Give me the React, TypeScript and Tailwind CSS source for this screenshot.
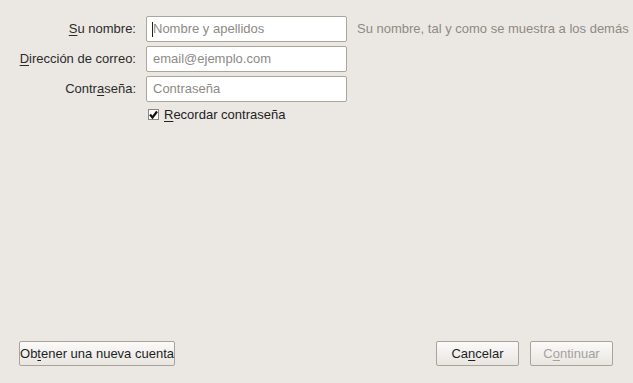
const FONT = "font-['Liberation_Sans',Arial,sans-serif]";

const FIELDS = [
  { pre: "", key: "S", post: "u nombre:", placeholder: "Nombre y apellidos", focused: true, hint: "Su nombre, tal y como se muestra a los demás" },
  { pre: "", key: "D", post: "irección de correo:", placeholder: "email@ejemplo.com", focused: false, hint: "" },
  { pre: "Contr", key: "a", post: "seña:", placeholder: "Contraseña", focused: false, hint: "" },
];

function Mnemonic({ pre, k, post }: { pre: string; k: string; post: string }) {
  return (
    <>
      {pre}
      <span className="underline underline-offset-2">{k}</span>
      {post}
    </>
  );
}

function Button({ pre, k, post, disabled, className = "" }: { pre: string; k: string; post: string; disabled?: boolean; className?: string }) {
  return (
    <button
      type="button"
      className={`h-[25px] rounded-[2px] border border-[#a9a49a] bg-gradient-to-b from-[#fbfaf9] to-[#e9e6e1] text-[13px] leading-none ${disabled ? "text-[#a5a19b]" : "text-[#1e1e1e]"} ${className}`}
    >
      <Mnemonic pre={pre} k={k} post={post} />
    </button>
  );
}

export default function App() {
  return (
    <div className={`flex h-screen w-full flex-col justify-between bg-[#ebe8e3] ${FONT} text-[13px] text-[#2b2b2b]`}>
      <div className="grid grid-cols-[136px_201px_auto] items-center gap-x-[10px] gap-y-[4px] pt-[16px]">
        {FIELDS.map((f) => (
          <div key={f.placeholder} className="contents">
            <label className="text-right">
              <Mnemonic pre={f.pre} k={f.key} post={f.post} />
            </label>
            <div className="relative flex h-[26px] items-center rounded-[2px] border border-[#aaa69c] bg-white pl-[6px] text-[#8e8a84]">
              {f.focused && <span className="absolute left-[5px] top-[5px] h-[15px] w-px bg-[#222]" />}
              {f.placeholder}
            </div>
            <span className="text-[#8e8a84]">{f.hint}</span>
          </div>
        ))}
        <div />
        <div className="-mt-[1px] flex items-center gap-[5px] pl-[2px]">
          <span className="flex h-[11px] w-[11px] items-center justify-center border border-[#8b877f] bg-white">
            <svg width="9" height="9" viewBox="0 0 9 9">
              <path d="M1 4.5 L3.5 7.5 L8 1.5" fill="none" stroke="#111" strokeWidth="2.2" />
            </svg>
          </span>
          <span className="whitespace-nowrap text-[#222]">
            <Mnemonic pre="" k="R" post="ecordar contraseña" />
          </span>
        </div>
        <div />
      </div>
      <div className="flex items-center justify-between pb-[17px] pl-[19px] pr-[20px]">
        <Button pre="Ob" k="t" post="ener una nueva cuenta" className="w-[156px]" />
        <div className="flex gap-[11px]">
          <Button pre="Ca" k="n" post="celar" className="w-[83px]" />
          <Button pre="C" k="o" post="ntinuar" disabled className="w-[83px]" />
        </div>
      </div>
    </div>
  );
}
